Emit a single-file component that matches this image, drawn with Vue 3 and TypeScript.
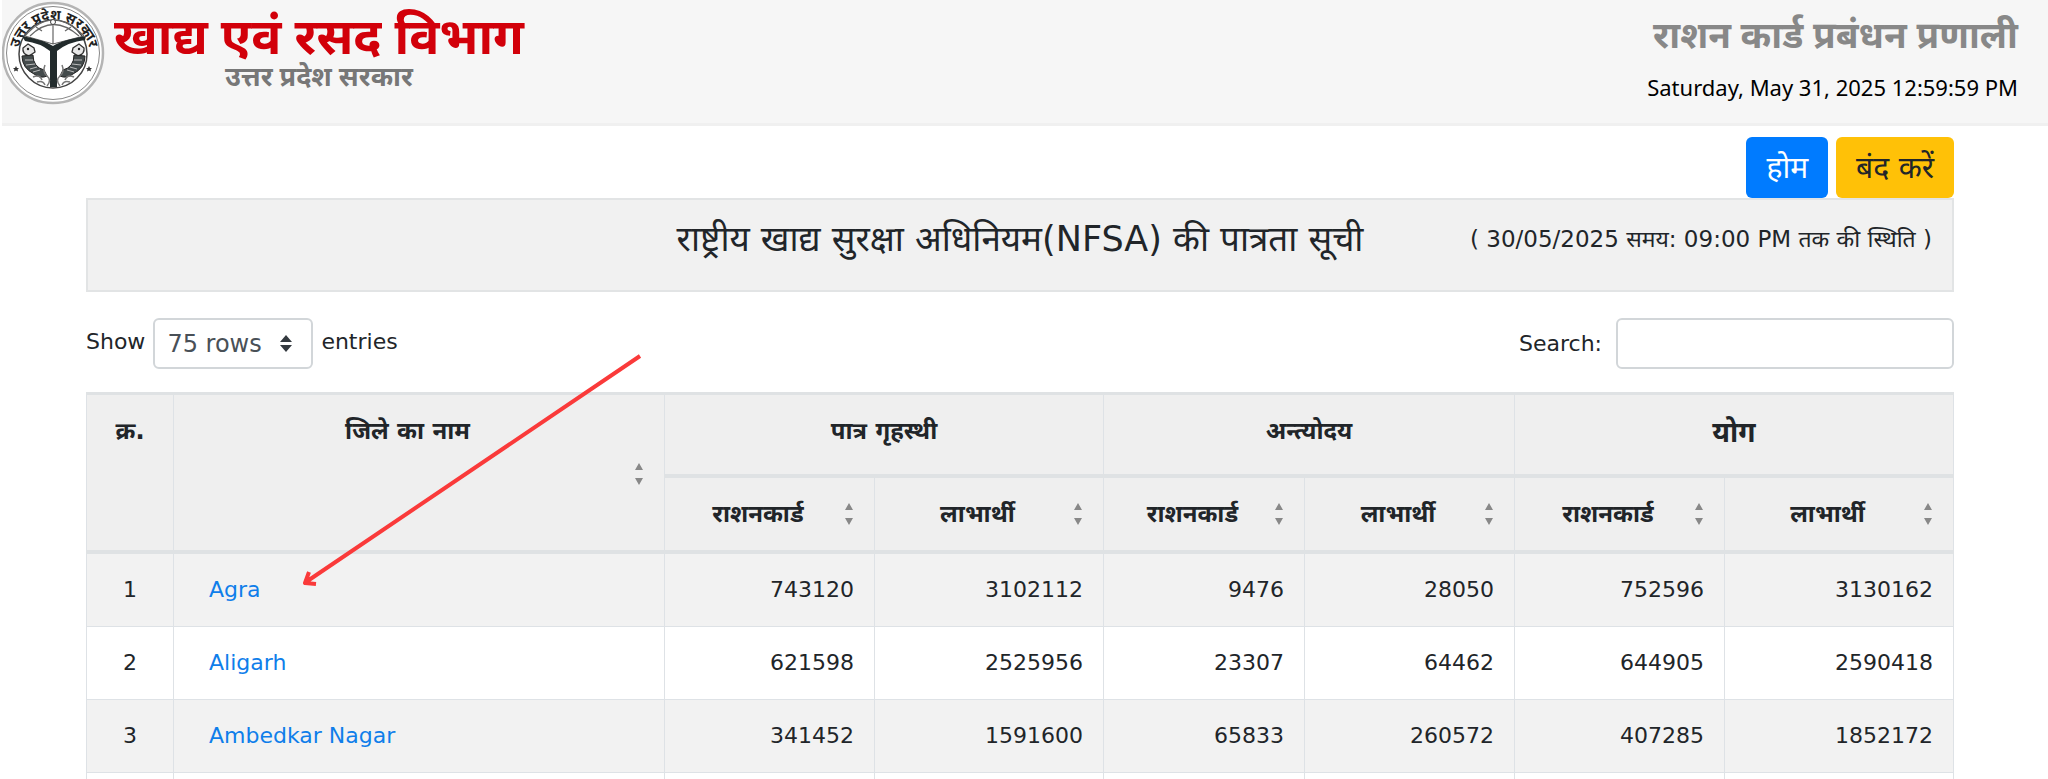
<script setup lang="ts">
import { computed, ref } from 'vue'

interface District {
  id: number
  name: string
  counts: number[]
}

const districts: District[] = [
  { id: 1, name: 'Agra', counts: [743120, 3102112, 9476, 28050, 752596, 3130162] },
  { id: 2, name: 'Aligarh', counts: [621598, 2525956, 23307, 64462, 644905, 2590418] },
  { id: 3, name: 'Ambedkar Nagar', counts: [341452, 1591600, 65833, 260572, 407285, 1852172] },
]

const subHeads = ['राशनकार्ड', 'लाभार्थी', 'राशनकार्ड', 'लाभार्थी', 'राशनकार्ड', 'लाभार्थी']
const query = ref('')
const sortKey = ref<number | null>(null)
const ascending = ref(true)

function sortBy(key: number) {
  ascending.value = sortKey.value === key ? !ascending.value : true
  sortKey.value = key
}

const visible = computed(() => {
  const list = districts.filter((d) => d.name.toLowerCase().includes(query.value.toLowerCase()))
  const key = sortKey.value
  if (key === null) return list
  const dir = ascending.value ? 1 : -1
  return list.sort((a, b) =>
    key < 0 ? dir * a.name.localeCompare(b.name) : dir * (a.counts[key] - b.counts[key]),
  )
})
</script>

<template>
  <div class="page">
    <header class="masthead">
      <div class="brand">
        <svg class="emblem" viewBox="0 0 104 106" role="img" aria-label="उत्तर प्रदेश सरकार">
          <defs>
            <path id="ring" d="M17 64 A36 36 0 1 1 87 64" />
          </defs>
          <circle cx="51" cy="53" r="50" fill="#fff" stroke="#b4b4b4" stroke-width="2.500" />
          <circle cx="51" cy="53" r="46.500" fill="#fff" stroke="#888" stroke-width="1" />
          <circle cx="51" cy="54" r="34" fill="#fff" stroke="#444" stroke-width="1.500" />
          <text class="ring-text"><textPath href="#ring" startOffset="50%" text-anchor="middle">उत्तर प्रदेश सरकार</textPath></text>
          <path d="M23 36 Q51 4 82 36 M28 36 Q51 13 77 36 M51 20 V44 M23 36 L51 44 L82 36 M34 27 L40 31 M69 27 L63 31" fill="none" stroke="#666" stroke-width="1.200" />
          <circle cx="51" cy="22" r="2.500" fill="#fff" stroke="#444" />
          <path d="M20 36 Q42 40 51 46 Q60 40 84 36 L83 40 Q66 42 55 51 V87 H48 V51 Q38 43 23 41 Z" fill="#222b2c" />
          <g id="fish">
            <path d="M21 48 L26 44 L32 48 L33 52 L27 56 Q20 54 21 48 Z" fill="#e8e8e8" stroke="#333" stroke-width="1.300" />
            <circle cx="26" cy="49" r="1.200" fill="#222" />
            <path d="M20 56 L31 55 Q31 67 42 70 L45 76 Q39 79 32 74 Q20 68 20 56 Z" fill="#444b4c" stroke="#222" />
            <path d="M23 60 L31 60 M24 65 L33 64 M28 69 L35 67 M31 72 L38 70" stroke="#bbb" stroke-width="1" />
            <path d="M31 77 Q38 74 40 80 M35 82 Q41 80 43 85 M43 65 Q40 72 45 76 T45 86" fill="none" stroke="#777" stroke-width="1.500" />
          </g>
          <use href="#fish" transform="translate(103 0) scale(-1 1)" />
          <path d="M14 66 l1 2 h2 l-1.500 1.500 .5 2 -2 -1 -2 1 .5 -2 -1.500 -1.500 h2 Z M87 66 l1 2 h2 l-1.500 1.500 .5 2 -2 -1 -2 1 .5 -2 -1.500 -1.500 h2 Z" fill="#333" />
        </svg>
        <div class="titles">
          <h1>खाद्य एवं रसद विभाग</h1>
          <p>उत्तर प्रदेश सरकार</p>
        </div>
      </div>
      <div class="system">
        <h2>राशन कार्ड प्रबंधन प्रणाली</h2>
        <time>Saturday, May 31, 2025 12:59:59 PM</time>
      </div>
    </header>

    <main class="content">
      <nav class="actions">
        <button type="button" class="btn home">होम</button>
        <button type="button" class="btn close">बंद करें</button>
      </nav>

      <section class="banner">
        <h3>राष्ट्रीय खाद्य सुरक्षा अधिनियम(NFSA) की पात्रता सूची</h3>
        <p>( 30/05/2025 समय: 09:00 PM तक की स्थिति )</p>
      </section>

      <div class="tools">
        <div class="length">
          <label for="rows">Show</label>
          <span class="select-box">
            <select id="rows">
              <option>75 rows</option>
            </select>
            <svg viewBox="0 0 12 18" aria-hidden="true"><path d="M0 7 6 0 12 7Z M0 10 H12 L6 17Z" fill="#343a40" /></svg>
          </span>
          <label for="rows">entries</label>
        </div>
        <div class="search">
          <label for="search">Search:</label>
          <input id="search" v-model="query" type="search" />
        </div>
      </div>

      <table>
        <colgroup>
          <col class="c-no" />
          <col class="c-name" />
          <col class="c-a" />
          <col class="c-b" />
          <col class="c-c" />
          <col class="c-a" />
          <col class="c-a" />
          <col class="c-b" />
        </colgroup>
        <thead>
          <tr>
            <th rowspan="2" class="plain">क्र.</th>
            <th rowspan="2" class="district">
              <button type="button" class="sort" @click="sortBy(-1)">
                <span>जिले का नाम</span>
                <svg viewBox="0 0 8 22" aria-hidden="true"><path d="M0 7 4 0 8 7Z M0 15 H8 L4 22Z" /></svg>
              </button>
            </th>
            <th colspan="2" class="plain">पात्र गृहस्थी</th>
            <th colspan="2" class="plain">अन्त्योदय</th>
            <th colspan="2" class="plain total">योग</th>
          </tr>
          <tr>
            <th v-for="(label, i) in subHeads" :key="i">
              <button type="button" class="sort" @click="sortBy(i)">
                <span>{{ label }}</span>
                <svg viewBox="0 0 8 22" aria-hidden="true"><path d="M0 7 4 0 8 7Z M0 15 H8 L4 22Z" /></svg>
              </button>
            </th>
          </tr>
        </thead>
        <tbody>
          <tr v-for="d in visible" :key="d.id">
            <td class="no">{{ d.id }}</td>
            <td class="name"><a href="#">{{ d.name }}</a></td>
            <td v-for="(n, i) in d.counts" :key="i">{{ n }}</td>
          </tr>
          <tr>
            <td v-for="i in 8" :key="i"></td>
          </tr>
        </tbody>
      </table>
    </main>

    <svg class="pointer" viewBox="0 0 346 238" aria-hidden="true">
      <path d="M342 4 L8 230 M11 220 L7 231 L18 232" fill="none" stroke="#fa3a3a" stroke-width="4" stroke-linejoin="round" />
    </svg>
  </div>
</template>

<style>
body {
  margin: 0;
  background: #fff;
}
</style>

<style scoped>
.page {
  position: relative;
  height: 100vh;
  overflow: hidden;
  color: #212529;
  font-family: Verdana, "DejaVu Sans", "Noto Sans", sans-serif;
  font-size: 22px;
  line-height: 32px;
}
* {
  box-sizing: border-box;
}
h1,
h2,
h3,
p {
  margin: 0;
}
.masthead {
  display: flex;
  justify-content: space-between;
  height: 126px;
  margin-left: 2px;
  padding-right: 30px;
  background: #f6f6f6;
  border-bottom: 3px solid #f0f0f0;
  font-family: "Noto Sans", "Open Sans", sans-serif;
}
.brand {
  display: flex;
  gap: 8px;
}
.emblem {
  width: 104px;
  height: 106px;
}
.ring-text {
  font-size: 14px;
  font-weight: 700;
  fill: #222;
}
.titles {
  text-align: center;
}
h1 {
  padding-top: 8px;
  color: #d2000a;
  font-size: 50px;
  line-height: 54px;
}
.titles p {
  color: #777;
  font-size: 27px;
  line-height: 28px;
  font-weight: 700;
}
.system {
  text-align: right;
}
.system h2 {
  padding-top: 12px;
  color: #888;
  font-size: 37px;
  line-height: 44px;
}
.system time {
  display: block;
  padding-top: 15px;
  color: #000;
  font-size: 22px;
}
.content {
  padding: 11px 94px 0 86px;
}
.actions {
  display: flex;
  justify-content: flex-end;
  gap: 8px;
}
.btn {
  height: 61px;
  padding: 0 20px;
  border: 0;
  border-radius: 6px;
  font: inherit;
  font-size: 30px;
}
.home {
  background: #007bff;
  color: #fff;
}
.close {
  background: #ffc107;
  color: #212529;
}
.banner {
  display: grid;
  grid-template-columns: 1fr auto 1fr;
  height: 94px;
  padding: 15px 20px;
  background: #f1f1f1;
  border: 2px solid #e2e4e5;
}
.banner h3 {
  grid-column: 2;
  font-size: 35px;
  line-height: 48px;
  font-weight: 400;
}
.banner p {
  justify-self: end;
  font-size: 23px;
  line-height: 48px;
}
.tools {
  display: flex;
  justify-content: space-between;
  padding: 26px 0 23px;
}
.length,
.search {
  display: flex;
  align-items: center;
  gap: 8px;
}
.length label {
  padding-bottom: 4px;
}
.select-box {
  display: grid;
  align-items: center;
}
.select-box > * {
  grid-area: 1 / 1;
}
.select-box svg {
  justify-self: end;
  width: 12px;
  height: 18px;
  margin-right: 21px;
  pointer-events: none;
}
select,
input {
  height: 51px;
  border: 2px solid #d2d6d9;
  border-radius: 6px;
  background: #fff;
  color: #495057;
  font: inherit;
}
select {
  width: 160px;
  padding: 0 12px;
  appearance: none;
  font-size: 24px;
}
.search {
  gap: 14px;
}
input {
  width: 338px;
  padding: 0 12px;
}
table {
  width: 100%;
  table-layout: fixed;
  border-collapse: collapse;
}
.c-no {
  width: 87px;
}
.c-a {
  width: 210px;
}
.c-b {
  width: 229px;
}
.c-c {
  width: 201px;
}
th,
td {
  border: 1px solid #dee2e6;
}
th {
  padding: 0;
  background: #efefef;
  border-bottom: 4px solid #dfe2e4;
  font-size: 24px;
}
thead tr:first-child th {
  height: 82px;
  border-top: 3px solid #dfe2e4;
  vertical-align: top;
}
thead tr:last-child th {
  height: 76px;
}
th.plain {
  padding: 20px 0 0;
}
th.total {
  padding-top: 22px;
  font-size: 28px;
}
.sort {
  display: flex;
  gap: 14px;
  align-items: center;
  width: 100%;
  padding: 0 21px 0 20px;
  border: 0;
  background: none;
  color: inherit;
  font: inherit;
}
.sort span {
  flex: 1;
}
.sort svg {
  width: 8px;
  height: 22px;
  fill: #888;
}
.district .sort {
  align-items: flex-start;
  padding-top: 20px;
}
.district .sort svg {
  margin-top: 48px;
}
td {
  height: 73px;
  padding: 0 20px;
  text-align: right;
}
tbody tr:first-child td {
  height: 75px;
}
td.no {
  text-align: center;
}
td.name {
  padding-left: 35px;
  text-align: left;
}
tbody tr:nth-child(odd) {
  background: #f2f2f2;
}
a {
  color: #0f7eea;
  text-decoration: none;
}
.pointer {
  position: absolute;
  top: 352px;
  left: 298px;
  width: 346px;
  height: 238px;
  pointer-events: none;
}
</style>
